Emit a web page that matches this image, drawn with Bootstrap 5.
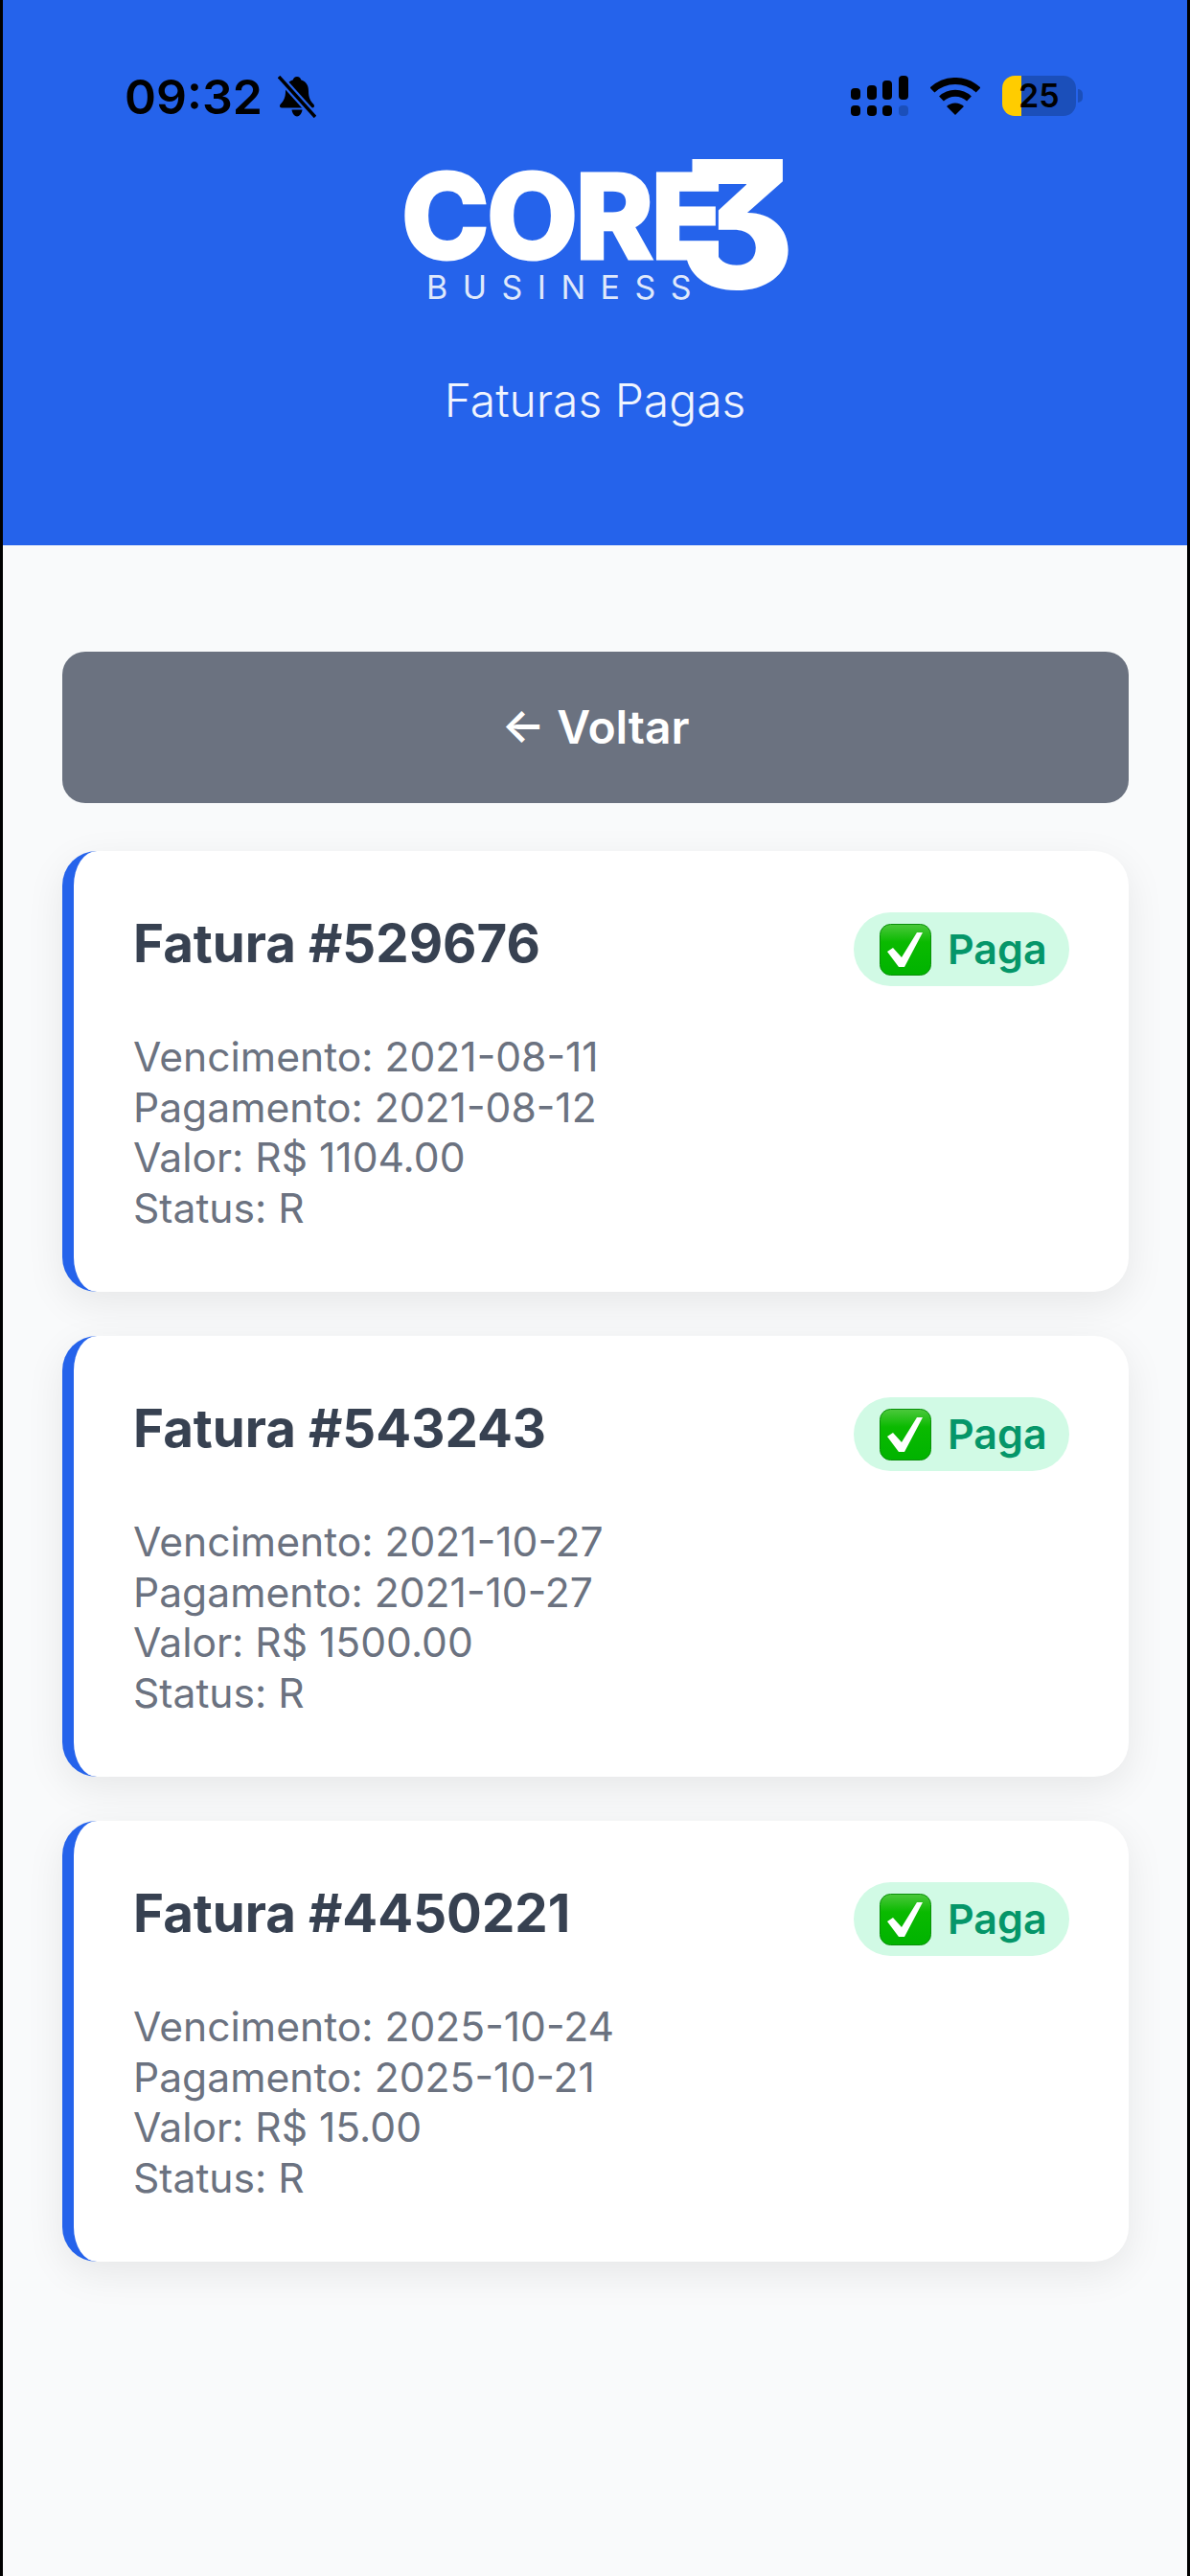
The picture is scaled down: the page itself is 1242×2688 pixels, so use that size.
<!DOCTYPE html>
<html lang="pt">
<head>
  <meta charset="UTF-8">
  <title>Faturas Pagas</title>
  <link rel="stylesheet" href="https://cdn.jsdelivr.net/npm/bootstrap@5.3.3/dist/css/bootstrap.min.css">
  <style>
    body {
      font-family: Inter, "Liberation Sans", sans-serif;
      background-color: #f9fafb;
    }
    .screen {
      min-height: 2688px;
      border-left: 3px solid #000;
      border-right: 3px solid #000;
    }
    .top-header {
      height: 569px;
      background-color: #2563eb;
      color: #fff;
    }
    .status-row {
      height: 166px;
      padding: 79px 109px 0 127px;
      color: #000;
    }
    .clock {
      font-size: 50px;
      font-weight: 600;
      line-height: 44px;
    }
    .bell-icon {
      margin-left: 16px;
    }
    .wifi-icon {
      margin: 2px 23px 0;
    }
    .signal-icon {
      margin-left: 3px;
    }
    .battery {
      width: 77px;
      height: 42px;
      border-radius: 13px;
      background: linear-gradient(to right, #ffcc00 20px, #1b4fba 20px);
      font-size: 34px;
      font-weight: 600;
      line-height: 42px;
      padding-left: 17px;
    }
    .battery-nub {
      width: 5px;
      height: 14px;
      margin: 14px 0 0 2px;
      border-radius: 0 6px 6px 0;
      background-color: #1b4fba;
    }
    .brand {
      width: 402px;
      height: 147px;
      font-weight: 800;
    }
    .brand-core {
      top: 14px;
      left: -1px;
      font-size: 123px;
      line-height: 92px;
      letter-spacing: -2.5px;
      -webkit-text-stroke: 3px #fff;
    }
    .brand-three {
      top: 0;
      right: -8px;
      font-size: 186px;
      line-height: 136px;
      font-feature-settings: "cv09";
    }
    .brand-sub {
      left: 25px;
      top: 121px;
      font-size: 34px;
      font-weight: 400;
      line-height: 26px;
      letter-spacing: 15.5px;
      color: #dfe8fb;
    }
    .page-subtitle {
      margin-top: 78px;
      font-size: 48px;
      font-weight: 300;
      line-height: 54px;
      color: #f0f4fe;
    }
    .page-body {
      padding: 111px 61px 0 62px;
    }
    .back-btn {
      height: 158px;
      border: 0;
      border-radius: 24px;
      background-color: #6b7280;
      color: #fff;
      font-size: 48px;
      font-weight: 600;
    }
    .invoice {
      height: 460px;
      margin-top: 46px;
      padding: 64px 62px 0 62px;
      background-color: #fff;
      border-left: 12px solid #2563eb;
      border-radius: 36px;
      box-shadow: 0 12px 40px rgba(0, 0, 0, .08);
    }
    #invoiceList {
      padding-top: 4px;
    }
    .invoice-title {
      margin: 0;
      font-size: 54.6px;
      font-weight: 700;
      line-height: 64px;
      color: #374151;
    }
    .paid-pill {
      width: 225px;
      height: 77px;
      padding-left: 27px;
      gap: 17px;
      border-radius: 39px;
      background-color: #d1fae5;
      color: #059669;
      font-size: 43px;
      font-weight: 600;
    }
    .invoice-info {
      margin-top: 48px;
      font-size: 42.6px;
      line-height: 52.6px;
      color: #6b7280;
    }
  </style>
</head>
<body>
  <div class="screen">
    <header class="top-header">
      <div class="status-row d-flex justify-content-between align-items-start">
        <div class="d-flex align-items-start">
          <span class="clock">09:32</span>
          <svg width="40" height="44" viewBox="0 0 40 44" class="bell-icon">
            <path d="M20 1c-2.400 0-3.800 1.500-4.100 3.200C9.500 6.500 8 11 8 16c0 6-1.500 10-5.500 14-1.200 1.800-.3 3.500 1.700 3.500h31.600c2 0 2.900-1.700 1.700-3.500C33.500 26 32 22 32 16c0-5-1.500-9.500-7.900-11.800C23.800 2.500 22.400 1 20 1zM14.500 35.500c.5 4 3 7 5.500 7s5-3 5.500-7z" fill="#000"/>
            <path d="M1 1l38 42" stroke="#2563eb" stroke-width="8"/>
            <path d="M1 1l38 42" stroke="#000" stroke-width="3.500"/>
          </svg>
        </div>
        <div class="d-flex align-items-start">
          <svg width="60" height="42" viewBox="0 0 60 42" fill="#000" class="signal-icon">
            <rect x="0" y="13" width="10" height="12" rx="4"/>
            <rect x="17" y="10" width="10" height="15" rx="4"/>
            <rect x="33" y="5" width="10" height="20" rx="4"/>
            <rect x="50" y="0" width="10" height="25" rx="4"/>
            <rect x="0" y="31" width="10" height="11" rx="4"/>
            <rect x="17" y="31" width="10" height="11" rx="4"/>
            <rect x="33" y="31" width="10" height="11" rx="4"/>
            <rect x="50" y="31" width="10" height="11" rx="4" fill="#1b4fba"/>
          </svg>
          <svg width="52" height="40" viewBox="0 0 52 40" class="wifi-icon">
            <path d="M2 13a35 35 0 0 1 48 0" fill="none" stroke="#000" stroke-width="7"/>
            <path d="M11.500 22a21 21 0 0 1 29 0" fill="none" stroke="#000" stroke-width="7"/>
            <path d="M17 30a13 13 0 0 1 18 0L26 39z" fill="#000"/>
          </svg>
          <div class="battery">25</div>
          <div class="battery-nub"></div>
        </div>
      </div>
      <div class="brand position-relative mx-auto">
        <div class="brand-core position-absolute">CORE</div>
        <div class="brand-three position-absolute">3</div>
        <div class="brand-sub position-absolute">BUSINESS</div>
      </div>
      <p class="page-subtitle text-center mb-0">Faturas Pagas</p>
    </header>

    <main class="page-body">
      <button type="button" class="back-btn btn w-100">← Voltar</button>
      <div id="invoiceList"></div>
    </main>
  </div>

  <script>
    const invoices = [
      { id: "529676", due: "2021-08-11", paid: "2021-08-12", value: "1104.00" },
      { id: "543243", due: "2021-10-27", paid: "2021-10-27", value: "1500.00" },
      { id: "4450221", due: "2025-10-24", paid: "2025-10-21", value: "15.00" }
    ];

    const check = `
      <svg width="54" height="54" viewBox="0 0 54 54">
        <defs>
          <linearGradient id="boxGreen" x1="0" y1="0" x2="0" y2="1">
            <stop offset="0" stop-color="#4cc83c"/>
            <stop offset=".35" stop-color="#0aba00"/>
            <stop offset="1" stop-color="#00b300"/>
          </linearGradient>
        </defs>
        <rect x=".5" y=".5" width="53" height="53" rx="11" fill="url(#boxGreen)" stroke="#0a8f0a"/>
        <path d="M8 29l6-4 9 10L39 9h6L26 45h-6z" fill="#fff"/>
      </svg>`;

    const list = document.getElementById("invoiceList");
    invoices.forEach(item => {
      const card = document.createElement("div");
      card.className = "invoice";
      card.innerHTML = `
        <div class="d-flex justify-content-between align-items-start">
          <h3 class="invoice-title">Fatura #${item.id}</h3>
          <span class="paid-pill d-inline-flex align-items-center">${check}Paga</span>
        </div>
        <div class="invoice-info">
          <div>Vencimento: ${item.due}</div>
          <div>Pagamento: ${item.paid}</div>
          <div>Valor: R$ ${item.value}</div>
          <div>Status: R</div>
        </div>`;
      list.appendChild(card);
    });
  </script>
  <script src="https://cdn.jsdelivr.net/npm/bootstrap@5.3.3/dist/js/bootstrap.bundle.min.js"></script>
</body>
</html>
